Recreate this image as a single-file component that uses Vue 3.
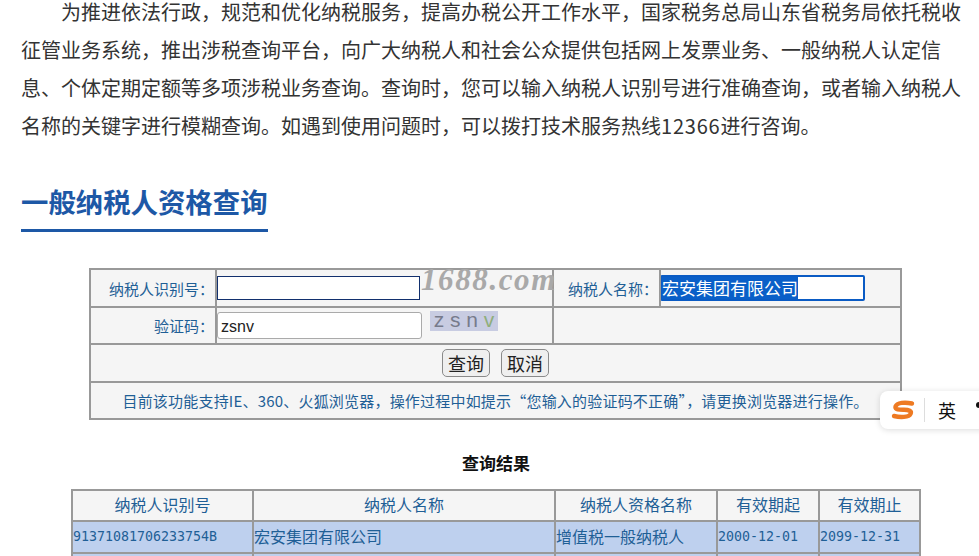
<template>
  <div class="page">
    <div class="intro">
      <span class="first">为推进依法行政，规范和优化纳税服务，提高办税公开工作水平，国家税务总局山东省税务局依托税收</span>
      <span>征管业务系统，推出涉税查询平台，向广大纳税人和社会公众提供包括网上发票业务、一般纳税人认定信</span>
      <span>息、个体定期定额等多项涉税业务查询。查询时，您可以输入纳税人识别号进行准确查询，或者输入纳税人</span>
      <span>名称的关键字进行模糊查询。如遇到使用问题时，可以拨打技术服务热线<b class="phone">12366</b>进行咨询。</span>
    </div>

    <h1 class="title">一般纳税人资格查询</h1>

    <table class="form-table">
      <colgroup>
        <col style="width: 126px" />
        <col style="width: 337px" />
        <col style="width: 107px" />
        <col />
      </colgroup>
      <tbody>
        <tr class="row-a">
          <td class="label">纳税人识别号：</td>
          <td class="field"><input class="id-input" type="text" /></td>
          <td class="label">纳税人名称：</td>
          <td class="field">
            <div class="name-input"><span class="selected">宏安集团有限公司</span></div>
          </td>
        </tr>
        <tr class="row-b">
          <td class="label">验证码：</td>
          <td class="field captcha-cell">
            <input class="code-input" type="text" value="zsnv" />
            <span class="captcha">z s n <i>v</i></span>
          </td>
          <td colspan="2"></td>
        </tr>
        <tr class="row-c">
          <td colspan="4" class="actions">
            <button type="button">查询</button>
            <button type="button">取消</button>
          </td>
        </tr>
        <tr class="row-d">
          <td colspan="4" class="notice">目前该功能支持IE、360、火狐浏览器，操作过程中如提示“您输入的验证码不正确”，请更换浏览器进行操作。</td>
        </tr>
      </tbody>
    </table>

    <div class="result-title">查询结果</div>

    <table class="result-table">
      <colgroup>
        <col style="width: 181px" />
        <col style="width: 302px" />
        <col style="width: 162px" />
        <col style="width: 102px" />
        <col />
      </colgroup>
      <thead>
        <tr>
          <th v-for="head in heads" :key="head">{{ head }}</th>
        </tr>
      </thead>
      <tbody>
        <tr v-for="(row, index) in rows" :key="index">
          <td class="num">{{ row.id }}</td>
          <td>{{ row.name }}</td>
          <td>{{ row.type }}</td>
          <td class="num">{{ row.start }}</td>
          <td class="num">{{ row.end }}</td>
        </tr>
      </tbody>
    </table>

    <div class="watermark">1688.com</div>

    <div class="ime">
      <svg class="ime-logo" viewBox="0 0 24 22" width="24" height="22">
        <path d="M21 4.5C14 3 6 3.5 4.5 7.5C3.5 11 9 10.8 13 10.8C18 10.8 21 12 19.5 15C18 18.5 9 18.5 3 17" fill="none" stroke="#ee7a22" stroke-width="4.4" stroke-linecap="round" />
      </svg>
      <span class="ime-line"></span>
      <span class="ime-text">英</span>
      <span class="ime-dot"></span>
    </div>
  </div>
</template>

<script setup>
const heads = ['纳税人识别号', '纳税人名称', '纳税人资格名称', '有效期起', '有效期止']

const rows = [
  {
    id: '91371081706233754B',
    name: '宏安集团有限公司',
    type: '增值税一般纳税人',
    start: '2000-12-01',
    end: '2099-12-31'
  },
  { id: '', name: '', type: '', start: '', end: '' }
]
</script>

<style>
html,
body {
  height: 556px;
  margin: 0;
  overflow: hidden;
  background: #ffffff;
}
</style>

<style scoped>
.page {
  position: relative;
  height: 556px;
  overflow: hidden;
  padding-left: 21px;
  box-sizing: border-box;
  color: #333333;
  font-family: "Noto Sans CJK SC", "Liberation Sans", sans-serif;
}

.intro {
  display: flex;
  flex-direction: column;
  gap: 14px;
  color: #333333;
  font-size: 20px;
  line-height: 24px;
  white-space: nowrap;
}

.intro .first {
  padding-left: 40px;
}

.phone {
  font-weight: 400;
  letter-spacing: 0.8px;
}

.title {
  display: inline-block;
  margin: 44px 0 0;
  border-bottom: 3px solid #1d58a6;
  padding-bottom: 9px;
  color: #1d58a6;
  font-size: 27.4px;
  font-weight: 700;
  line-height: 38px;
}

.form-table {
  width: 813px;
  margin: 36px 0 0 68px;
  border-collapse: collapse;
  table-layout: fixed;
  background: #f5f5f5;
}

.form-table td {
  border: 2px solid #999999;
  padding: 0;
}

.row-a td {
  height: 36px;
}

.row-b td {
  height: 35px;
}

.row-c td {
  height: 36px;
}

.row-d td {
  height: 35px;
}

.form-table .label {
  padding-right: 1px;
  color: #1f5f96;
  font-size: 15px;
  text-align: right;
}

.form-table .field {
  font-size: 0;
}

.id-input {
  display: block;
  width: 203px;
  height: 24px;
  margin-top: 0;
  box-sizing: border-box;
  border: 1.5px solid #12306e;
  padding: 0;
  background: #ffffff;
  outline: none;
}

.name-input {
  width: 205px;
  height: 26px;
  margin-left: -1px;
  box-sizing: border-box;
  border: 2px solid #0a5bc4;
  border-radius: 2px;
  background: #ffffff;
  color: #ffffff;
  font-size: 17px;
  line-height: 22px;
}

.selected {
  display: inline-block;
  height: 22px;
  background: #0a5fc8;
}

.captcha-cell {
  white-space: nowrap;
}

.code-input {
  width: 205px;
  height: 27px;
  box-sizing: border-box;
  border: 1px solid #aaaaaa;
  border-radius: 3px;
  padding: 3px 4px 0 3px;
  background: #ffffff;
  color: #222222;
  font-family: "Liberation Sans", sans-serif;
  font-size: 16px;
  outline: none;
  vertical-align: top;
}

.captcha {
  display: inline-block;
  width: 68px;
  height: 20px;
  margin: -1px 0 0 8px;
  background: #c8cce2;
  color: #777b8c;
  font-family: "Liberation Sans", sans-serif;
  font-size: 21px;
  line-height: 18px;
  text-align: center;
  vertical-align: top;
}

.captcha i {
  color: #8fae7c;
  font-style: normal;
}

.actions {
  text-align: center;
}

.actions button {
  width: 48px;
  height: 28px;
  margin: 0 5.5px;
  border: 1px solid #8a8a8a;
  border-radius: 5px;
  padding: 0;
  background: #efefef;
  color: #222222;
  font-family: "Noto Sans CJK SC", sans-serif;
  font-size: 18px;
  line-height: 24px;
}

.notice {
  color: #1f5f96;
  font-size: 15px;
  letter-spacing: 0.2px;
  text-align: center;
}

.result-title {
  width: 950px;
  margin-top: 31px;
  color: #111111;
  font-size: 17px;
  font-weight: 700;
  line-height: 24px;
  text-align: center;
}

.result-table {
  width: 850px;
  margin: 14px 0 0 50px;
  border-collapse: collapse;
  table-layout: fixed;
  color: #1f5f96;
  font-size: 16px;
}

.result-table th,
.result-table td {
  height: 28px;
  border: 2px solid #999999;
  padding: 0 0 2px;
  font-weight: 400;
  white-space: nowrap;
}

.result-table th {
  height: 26px;
  padding-bottom: 3px;
  background: #f5f5f5;
  text-align: center;
}

.result-table td {
  background: #bed0ee;
  text-align: left;
}

.result-table .num {
  font-family: "DejaVu Sans Mono", monospace;
  font-size: 13.3px;
}

.watermark {
  position: absolute;
  top: 262px;
  left: 421px;
  color: #a9a9a9;
  font-family: "Liberation Serif", serif;
  font-size: 31px;
  font-style: italic;
  font-weight: 700;
  letter-spacing: 1.6px;
  line-height: 36px;
  white-space: nowrap;
}

.ime {
  position: absolute;
  top: 391px;
  left: 880px;
  display: flex;
  align-items: center;
  width: 120px;
  height: 38px;
  box-sizing: border-box;
  padding-left: 11px;
  border-radius: 8px;
  background: #ffffff;
  box-shadow: 0 1px 6px rgba(0, 0, 0, 0.14);
}

.ime-logo {
  flex: 0 0 auto;
}

.ime-line {
  width: 1px;
  height: 24px;
  margin: 0 13px 0 9px;
  background: #dddddd;
}

.ime-text {
  color: #111111;
  font-size: 18px;
  line-height: 24px;
}

.ime-dot {
  width: 6px;
  height: 6px;
  margin: -10px 0 0 20px;
  border-radius: 50%;
  background: #111111;
}
</style>
